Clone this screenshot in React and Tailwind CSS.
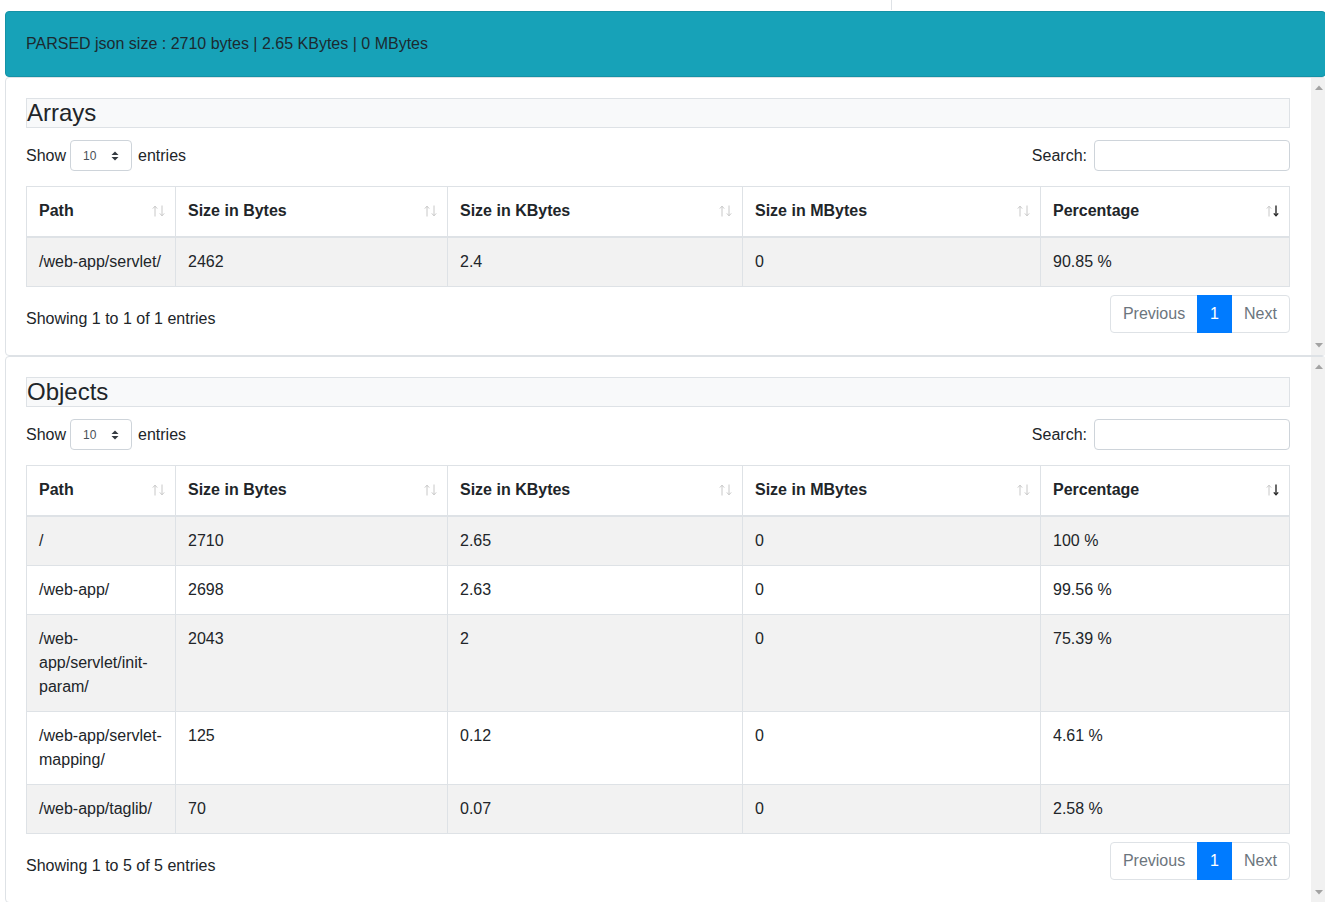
import React from 'react';

const arrays = [
  { path: '/web-app/servlet/', bytes: '2462', kb: '2.4', mb: '0', pct: '90.85 %' },
];

const objects = [
  { path: '/', bytes: '2710', kb: '2.65', mb: '0', pct: '100 %' },
  { path: '/web-app/', bytes: '2698', kb: '2.63', mb: '0', pct: '99.56 %' },
  { path: '/web-app/servlet/init-param/', bytes: '2043', kb: '2', mb: '0', pct: '75.39 %' },
  { path: '/web-app/servlet-mapping/', bytes: '125', kb: '0.12', mb: '0', pct: '4.61 %' },
  { path: '/web-app/taglib/', bytes: '70', kb: '0.07', mb: '0', pct: '2.58 %' },
];

const columns = [
  { label: 'Path', width: 'w-[149px]' },
  { label: 'Size in Bytes', width: 'w-[272px]' },
  { label: 'Size in KBytes', width: 'w-[295px]' },
  { label: 'Size in MBytes', width: 'w-[298px]' },
  { label: 'Percentage', width: 'w-[249px]', active: true },
];

const SortIcon = ({ active }) => (
  <svg width="13" height="12" viewBox="0 0 13 12" className="shrink-0">
    <g fill="none" stroke="#c8c8c8" strokeWidth="1">
      <line x1="3" y1="11.5" x2="3" y2="1" />
      <polyline points="0.8,3.6 3,1.2 5.2,3.6" />
    </g>
    <g fill="none" stroke={active ? '#2b2b2b' : '#c8c8c8'} strokeWidth={active ? 1.4 : 1}>
      <line x1="10" y1="0.5" x2="10" y2="11" />
      <polyline points="7.8,8.4 10,10.8 12.2,8.4" />
    </g>
  </svg>
);

const SelectCaret = () => (
  <svg width="8" height="10" viewBox="0 0 8 10">
    <polygon points="0.5,4 4,0.5 7.5,4" fill="#343a40" />
    <polygon points="0.5,6 4,9.5 7.5,6" fill="#343a40" />
  </svg>
);

const ScrollTrack = () => (
  <div className="w-[15px] shrink-0 bg-[#f1f1f1] flex flex-col justify-between items-center py-[7px]">
    <svg width="8" height="5" viewBox="0 0 8 5">
      <polygon points="0,5 4,0.5 8,5" fill="#a3a3a3" />
    </svg>
    <svg width="8" height="5" viewBox="0 0 8 5">
      <polygon points="0,0 4,4.5 8,0" fill="#a3a3a3" />
    </svg>
  </div>
);

const DataPanel = ({ title, rows, info }) => (
  <div className="w-[1321px] border border-[#dee2e6] rounded flex">
    <div className="flex-1 pl-5 pr-[21px] pt-5 pb-[22px]">
      {/* Title */}
      <div className="h-[30px] bg-[#f8f9fa] border border-[#dee2e6] text-[24px] leading-[28px] text-[#212529]">
        {title}
      </div>

      {/* Length + search */}
      <div className="mt-3 flex justify-between items-center h-[31px]">
        <div className="flex items-center">
          <span>Show</span>
          <div className="mx-1 w-[62px] h-[31px] border border-[#ced4da] rounded flex items-center justify-between pl-3 pr-3 text-[12px] text-[#495057]">
            <span>10</span>
            <SelectCaret />
          </div>
          <span className="ml-[2px]">entries</span>
        </div>
        <div className="flex items-center">
          <span>Search:</span>
          <div className="ml-[7px] w-[196px] h-[31px] border border-[#ced4da] rounded" />
        </div>
      </div>

      {/* Table */}
      <table className="mt-[15px] w-[1263px] table-fixed border-collapse text-[16px] leading-6">
        <colgroup>
          {columns.map((c) => (
            <col key={c.label} className={c.width} />
          ))}
        </colgroup>
        <thead>
          <tr>
            {columns.map((c) => (
              <th key={c.label} className="border border-[#dee2e6] border-b-2 pl-3 pr-[10px] pt-3 pb-[13px] text-left font-bold">
                <div className="flex items-center justify-between">
                  <span>{c.label}</span>
                  <SortIcon active={c.active} />
                </div>
              </th>
            ))}
          </tr>
        </thead>
        <tbody>
          {rows.map((r, i) => (
            <tr key={r.path} className={i % 2 === 0 ? 'bg-[#f2f2f2]' : 'bg-white'}>
              <td className="border border-[#dee2e6] p-3 align-top">{r.path}</td>
              <td className="border border-[#dee2e6] p-3 align-top">{r.bytes}</td>
              <td className="border border-[#dee2e6] p-3 align-top">{r.kb}</td>
              <td className="border border-[#dee2e6] p-3 align-top">{r.mb}</td>
              <td className="border border-[#dee2e6] p-3 align-top">{r.pct}</td>
            </tr>
          ))}
        </tbody>
      </table>

      {/* Footer */}
      <div className="mt-2 flex justify-between items-start">
        <div className="pt-[12px]">{info}</div>
        <div className="flex h-[38px] border border-[#dee2e6] rounded">
          <div className="w-[86px] flex items-center justify-center text-[#6c757d]">Previous</div>
          <div className="w-[35px] flex items-center justify-center bg-[#007bff] text-white -my-px">1</div>
          <div className="w-[57px] flex items-center justify-center text-[#6c757d]">Next</div>
        </div>
      </div>
    </div>
    <ScrollTrack />
  </div>
);

export default function App() {
  return (
    <div className="w-[1325px] h-[902px] overflow-hidden bg-white text-[16px] leading-6 text-[#212529] font-['Liberation_Sans',Arial,sans-serif]">
      {/* strip above */}
      <div className="h-[11px]">
        <div className="ml-[891px] w-px h-[10px] bg-[#dee2e6]" />
      </div>

      <div className="ml-[5px]">
        {/* Alert */}
        <div className="w-[1321px] h-[66px] bg-[#17a2b8] border border-[#1592a6] rounded px-5 flex items-center text-[#1c2a30]">
          PARSED json size : 2710 bytes | 2.65 KBytes | 0 MBytes
        </div>

        <DataPanel title="Arrays" rows={arrays} info="Showing 1 to 1 of 1 entries" />
        <DataPanel title="Objects" rows={objects} info="Showing 1 to 5 of 5 entries" />
      </div>
    </div>
  );
}
